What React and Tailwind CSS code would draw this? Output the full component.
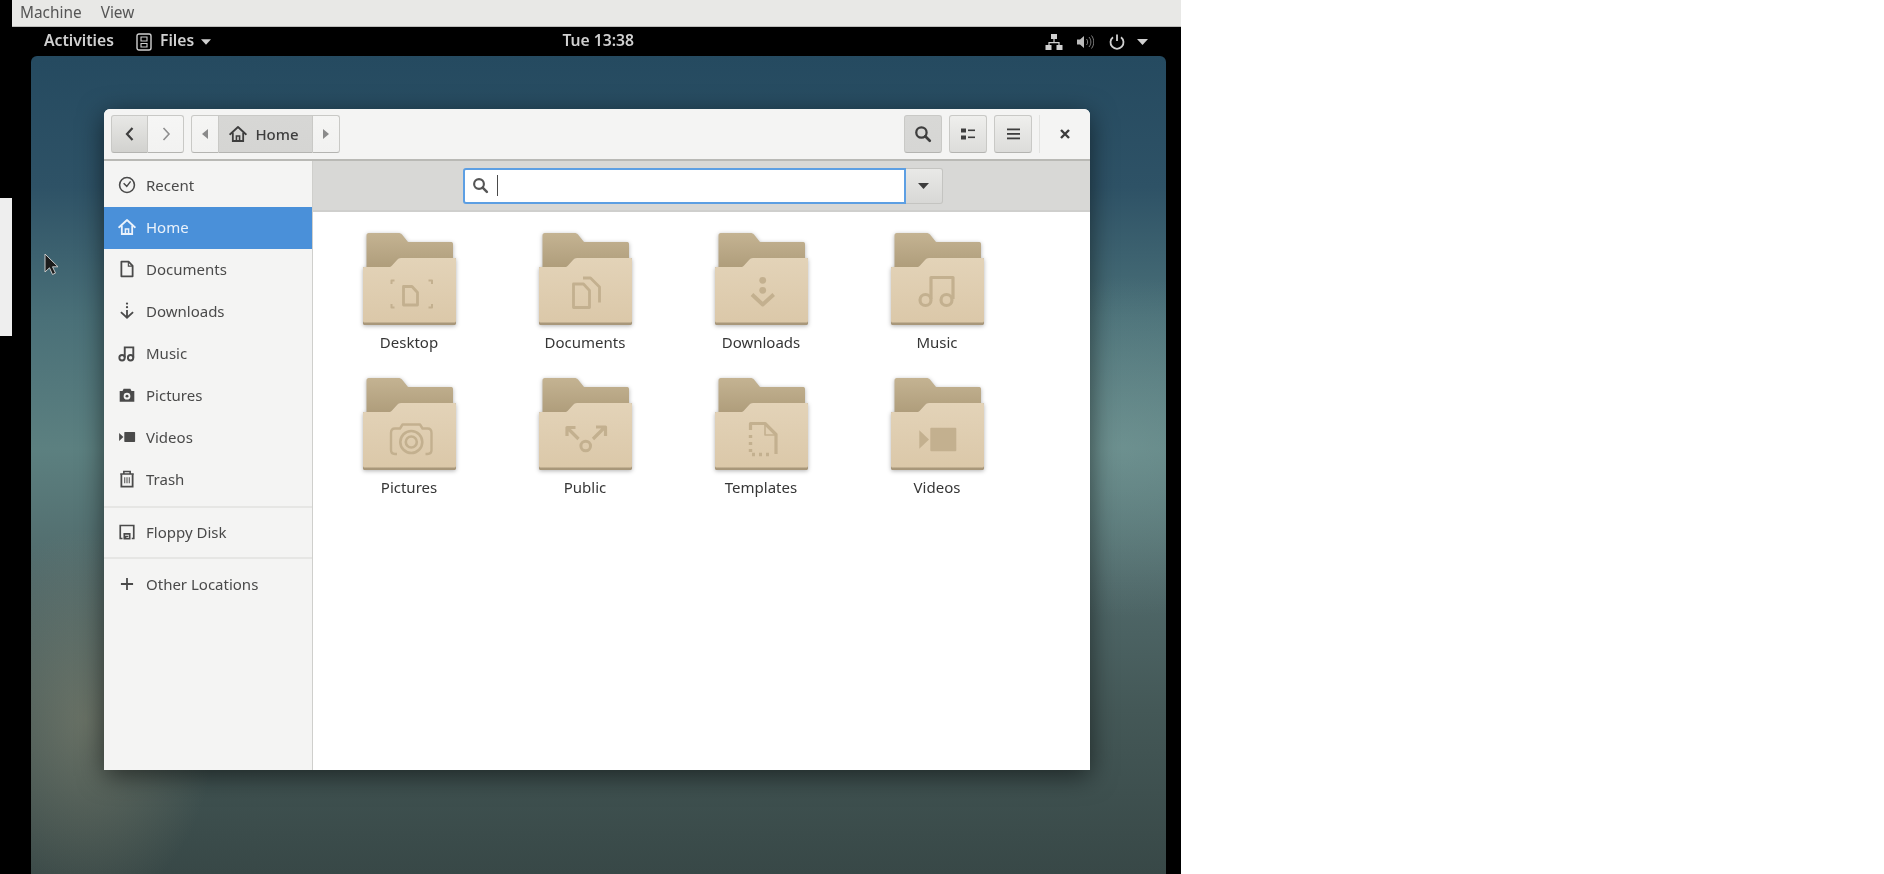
const uiFont = { fontFamily: '"Noto Sans", "Open Sans", sans-serif' };

function Glyph({ children, size = 18, className = '' }) {
  return (
    <svg width={size} height={size} viewBox="0 0 16 16" fill="none" stroke="currentColor" strokeWidth="1.4" className={`shrink-0 ${className}`}>
      {children}
    </svg>
  );
}

const HomeGlyph = (
  <>
    <path d="M1 8.200 8 1.800l7 6.400" strokeWidth="1.600" strokeLinecap="round" strokeLinejoin="round" />
    <path d="M3.400 6.600v7.600h9.200V6.600" strokeWidth="1.600" />
    <path d="M6.600 14V9.800h2.800V14" />
  </>
);

const SearchGlyph = (
  <>
    <circle cx="6.600" cy="6.600" r="4.600" strokeWidth="2" />
    <path d="m10 10 4 4" strokeWidth="2.400" strokeLinecap="round" />
  </>
);

const sidebarGlyphs = {
  recent: (
    <>
      <circle cx="8" cy="8" r="6.600" strokeWidth="1.400" />
      <path d="M5 6.400 7.800 9.200 11.200 4.800" strokeWidth="1.300" />
    </>
  ),
  home: HomeGlyph,
  documents: (
    <>
      <path d="M3 1.500h6.400L13 5.200v9.300H3z" strokeWidth="1.600" strokeLinejoin="round" />
      <path d="M9.200 1.500v3.900H13" strokeWidth="1" />
    </>
  ),
  downloads: (
    <>
      <circle cx="8" cy="1.400" r="1" fill="currentColor" stroke="none" />
      <circle cx="8" cy="4.600" r="1" fill="currentColor" stroke="none" />
      <path d="M8 7v6.400M2.600 9l5.400 5 5.400-5" strokeWidth="1.600" />
    </>
  ),
  music: (
    <>
      <circle cx="3.600" cy="12.200" r="2.400" strokeWidth="1.700" />
      <circle cx="11.200" cy="12.200" r="2.400" strokeWidth="1.700" />
      <path d="M6 12V3h7.600v9" strokeWidth="1.700" />
    </>
  ),
  pictures: (
    <>
      <path fillRule="evenodd" clipRule="evenodd" fill="currentColor" stroke="none" d="M5 2.500h6l1 2h2.500v9.500h-13V4.500H4zM8 6a3 3 0 1 0 0 6 3 3 0 0 0 0-6z" />
      <circle cx="8" cy="9" r="1.300" fill="currentColor" stroke="none" />
    </>
  ),
  videos: (
    <>
      <rect x="5.600" y="3.600" width="9.600" height="8.800" rx="0.600" fill="currentColor" stroke="none" />
      <path d="M1 4.400v7.200L4.800 8z" fill="currentColor" stroke="none" />
    </>
  ),
  trash: (
    <>
      <path d="M2 3.600h12M5.200 3.400V1.400h5.600v2" />
      <path d="M3 3.800v10.900h10V3.800" strokeWidth="1.600" />
      <path d="M6 6.400v5.400M8 6.400v5.400M10 6.400v5.400" strokeWidth="0.900" />
    </>
  ),
  floppy: (
    <>
      <path d="M4 13.800H2V2.200h12v11.600h-1.800" strokeWidth="1.500" />
      <path d="M5.600 14V9.600h4.800V14z" strokeWidth="1.500" />
      <path d="M6.800 14v-2h2.400" strokeWidth="1.200" />
    </>
  ),
  other: <path d="M8 2.600v10.800M2.600 8h10.800" strokeWidth="1.600" />,
};

const places = [
  ['recent', 'Recent'],
  ['home', 'Home'],
  ['documents', 'Documents'],
  ['downloads', 'Downloads'],
  ['music', 'Music'],
  ['pictures', 'Pictures'],
  ['videos', 'Videos'],
  ['trash', 'Trash'],
];

function SidebarRow({ icon, label, active }) {
  return (
    <div className={`flex h-[42px] items-center gap-[10px] pb-[2px] pl-[14px] text-[15px] ${active ? 'bg-[#4a90d9] text-[#eaf2fb]' : 'text-[#4a4a4a]'}`}>
      <Glyph>{sidebarGlyphs[icon]}</Glyph>
      <span>{label}</span>
    </div>
  );
}

// symbols pressed into the folder front, in folder coordinates
const folderMarks = {
  Desktop: (
    <>
      <path d="M40.500 53.500h8.500l5.500 6v12.500h-14z" strokeWidth="2.800" />
      <path d="M28.500 51v-3.500h3M65.500 47.500h3.500V51M28.500 71v3.500h3M65.500 74.500h3.500V71" strokeWidth="2" />
    </>
  ),
  Documents: (
    <>
      <path d="M34.500 51h10l6 6.500v17h-16z" strokeWidth="2.800" />
      <path d="M44 45h7.500l9 9v15.500" strokeWidth="2.800" />
    </>
  ),
  Downloads: (
    <>
      <circle cx="47.700" cy="47.300" r="3.400" fill="#c3b08f" stroke="none" />
      <circle cx="47.700" cy="57.300" r="3.400" fill="#c3b08f" stroke="none" />
      <path d="m37 61.500 10.700 10 11-10" strokeWidth="3.800" />
    </>
  ),
  Music: (
    <>
      <circle cx="34.500" cy="67" r="5.500" strokeWidth="3.200" />
      <circle cx="55.500" cy="67" r="5.500" strokeWidth="3.200" />
      <path d="M40 66V44.500h22V66" strokeWidth="3.200" />
    </>
  ),
  Pictures: (
    <>
      <path d="M34 76h-2c-2.500 0-4-1.500-4-4V55c0-3 1.500-4.500 4-4.500h5l2.500-4h17.500l2.500 4h5c2.500 0 4 1.500 4 4.500v17c0 2.500-1.500 4-4 4h-2" strokeWidth="2.400" />
      <circle cx="48.300" cy="64" r="11" strokeWidth="2.600" />
      <circle cx="48.300" cy="64" r="5.500" strokeWidth="2.600" />
    </>
  ),
  Public: (
    <>
      <circle cx="46.700" cy="68" r="4.800" strokeWidth="3" />
      <path d="M39.500 61 29 50.500M28 58v-8.500h8.500M54 61l11.500-11.500M57 49h9.500v9" strokeWidth="3.200" />
    </>
  ),
  Templates: (
    <>
      <path d="M35.500 52v-6.500h14.500l11 11v19.500" strokeWidth="3.200" />
      <path d="M50 46v11h11" strokeWidth="1.600" />
      <path d="M35.500 57v19.500H58" strokeWidth="3.400" strokeDasharray="3 4" />
    </>
  ),
  Videos: (
    <>
      <rect x="39.300" y="49.700" width="26" height="23.600" rx="1" fill="#c3b08f" stroke="none" />
      <path d="M28.300 52.300v18.400L38 61.500z" fill="#c3b08f" stroke="none" />
    </>
  ),
};

const folders = ['Desktop', 'Documents', 'Downloads', 'Music', 'Pictures', 'Public', 'Templates', 'Videos'];

function Folder({ name }) {
  const gradBack = `back-${name}`;
  const gradFront = `front-${name}`;
  return (
    <div className="flex flex-col items-center">
      <svg width="93" height="93" viewBox="0 0 93 93" className="block drop-shadow-[0_1px_2px_rgba(0,0,0,0.3)]">
        <defs>
          <linearGradient id={gradBack} x1="0" y1="0" x2="0" y2="1">
            <stop offset="0" stopColor="#c4b392" />
            <stop offset="1" stopColor="#ab9977" />
          </linearGradient>
          <linearGradient id={gradFront} x1="0" y1="0" x2="0" y2="1">
            <stop offset="0" stopColor="#e3d3b8" />
            <stop offset="1" stopColor="#dbc8a9" />
          </linearGradient>
        </defs>
        <path d="M3.500 2c0-1 1-2 2-2h30c1.500 0 2.500.5 3.500 1.500l6 7.500h43.500c1 0 1.500 1 1.500 2v30H3.500z" fill={`url(#${gradBack})`} />
        <path d="M0 90.500c0 .8.700 1.500 1.500 1.500h90c.800 0 1.500-.7 1.500-1.500V26.500c0-.8-.7-1.500-1.500-1.500H38c-2 0-3 .8-4 2l-5 5.500c-1 1-2 1.500-3.500 1.500H1.500C.7 34 0 34.700 0 35.500z" fill="#a8977a" />
        <path d="M0 88c0 .8.700 1.500 1.500 1.500h90c.800 0 1.500-.7 1.500-1.500V26.500c0-.8-.7-1.500-1.500-1.500H38c-2 0-3 .8-4 2l-5 5.500c-1 1-2 1.500-3.500 1.500H1.500C.7 34 0 34.700 0 35.500z" fill={`url(#${gradFront})`} />
        <g fill="none" stroke="#c3b08f" strokeLinejoin="round">{folderMarks[name]}</g>
      </svg>
      <span className="mt-[6px] text-[15px] leading-5 text-[#363636]">{name}</span>
    </div>
  );
}

function HeaderButton({ children, className = '' }) {
  return (
    <div className={`flex h-[38px] items-center justify-center rounded-[3px] border border-[#c9c9c6] border-b-[#b4b4b1] bg-gradient-to-b from-[#efefed] to-[#dcdcda] text-[#3e3e3e] ${className}`}>
      {children}
    </div>
  );
}

function TopBar() {
  return (
    <div className="flex h-[29px] items-center bg-black pl-[32px] pr-[33px] text-[15.7px] font-semibold text-[#d0d0d0]">
      <span className="pb-[2px]">Activities</span>
      <svg width="16" height="18" viewBox="0 0 16 18" fill="none" stroke="currentColor" className="ml-[22px]">
        <rect x="1" y="1" width="14" height="16" rx="2" strokeWidth="1.400" />
        <path d="M5 4h6v4H5zM5 10.500h6v3.500H5z" strokeWidth="1.100" />
      </svg>
      <span className="ml-[8px] pb-[2px]">Files</span>
      <svg width="10" height="6" viewBox="0 0 11 6" className="ml-[7px]">
        <path d="M0 0h11L5.500 6z" fill="currentColor" />
      </svg>
      <span className="ml-[351px] w-[72px] whitespace-nowrap pb-[2px] text-center">Tue 13:38</span>
      <div className="ml-auto flex items-center">
        <svg width="18" height="18" viewBox="0 0 18 18" fill="currentColor">
          <rect x="6" y="1" width="6" height="5" />
          <rect x="0.500" y="12" width="6" height="5" />
          <rect x="11.500" y="12" width="6" height="5" />
          <path d="M8.400 6h1.200v3h5v3h-1.200v-1.800H4.600V12H3.400V9h5z" />
        </svg>
        <svg width="18" height="18" viewBox="0 0 18 18" fill="currentColor" className="ml-[13px]">
          <path d="M1 6.500h3L8 3v12l-4-3.500H1z" opacity="0.9" />
          <path d="M10.500 6c1.500 1.500 1.500 4.500 0 6M13 4c2.500 3 2.500 7 0 10M15.500 2.500c3 4 3 9 0 13" fill="none" stroke="currentColor" strokeWidth="1" opacity="0.6" />
        </svg>
        <svg width="18" height="18" viewBox="0 0 18 18" fill="none" stroke="currentColor" strokeWidth="1.800" className="ml-[14px]">
          <path d="M9 1.500V8" />
          <path d="M5 4.200a6.500 6.500 0 1 0 8 0" />
        </svg>
        <svg width="11" height="6" viewBox="0 0 11 6" className="ml-[11px]">
          <path d="M0 0h11L5.500 6z" fill="currentColor" />
        </svg>
      </div>
    </div>
  );
}

function NautilusWindow() {
  return (
    <div className="flex h-[661px] w-[986px] flex-col overflow-hidden rounded-t-[6px] bg-white shadow-[0_6px_26px_rgba(0,0,0,0.55)]">
      <div className="flex h-[52px] shrink-0 items-center border-b-2 border-[#b9b9b5] bg-[#f4f4f3] pl-[7px] pr-[19px]">
        <div className="flex">
          <HeaderButton className="w-[37px] rounded-r-none !from-[#e8e8e6] !to-[#d2d2cf]">
            <Glyph size={16}><path d="M10.500 2 5 8l5.500 6" strokeWidth="2.200" /></Glyph>
          </HeaderButton>
          <HeaderButton className="w-[36px] rounded-l-none border-l-0 !from-[#f6f6f5] !to-[#f2f2f1] text-[#8f8f8f]">
            <Glyph size={16}><path d="M5.500 2 11 8l-5.500 6" strokeWidth="1.600" /></Glyph>
          </HeaderButton>
        </div>
        <div className="ml-[7px] flex">
          <HeaderButton className="w-[28px] rounded-r-none !from-[#f5f5f4] !to-[#f1f1f0] text-[#8a8a8a]">
            <svg width="6" height="10" viewBox="0 0 6 10"><path d="M6 0v10L0 5z" fill="currentColor" /></svg>
          </HeaderButton>
          <HeaderButton className="w-[93px] gap-[8px] rounded-none border-x-0 !from-[#d7d7d5] !to-[#d5d5d3] pr-[3px] text-[15px] font-medium">
            <Glyph size={18}>{HomeGlyph}</Glyph>
            <span>Home</span>
          </HeaderButton>
          <HeaderButton className="w-[28px] rounded-l-none !from-[#f5f5f4] !to-[#f1f1f0] text-[#8a8a8a]">
            <svg width="6" height="10" viewBox="0 0 6 10"><path d="M0 0v10l6-5z" fill="currentColor" /></svg>
          </HeaderButton>
        </div>
        <HeaderButton className="ml-auto w-[38px] !from-[#d8d8d6] !to-[#d6d6d4]">
          <Glyph size={18}>{SearchGlyph}</Glyph>
        </HeaderButton>
        <HeaderButton className="ml-[7px] w-[38px]">
          <svg width="14" height="12" viewBox="0 0 14 12" fill="currentColor">
            <rect x="0" y="0.500" width="5" height="4" />
            <rect x="0" y="7.500" width="5" height="4" />
            <rect x="7" y="1.500" width="7" height="1.600" />
            <rect x="7" y="8.500" width="7" height="1.600" />
          </svg>
        </HeaderButton>
        <HeaderButton className="ml-[7px] w-[38px]">
          <svg width="13" height="12" viewBox="0 0 13 12" fill="currentColor">
            <rect y="0.500" width="13" height="1.800" />
            <rect y="5" width="13" height="1.800" />
            <rect y="9.500" width="13" height="1.800" />
          </svg>
        </HeaderButton>
        <div className="ml-[7px] h-[38px] w-px bg-[#e2e2e0]" />
        <svg width="12" height="12" viewBox="0 0 12 12" stroke="#3c3c3c" strokeWidth="2.400" className="ml-[19px]">
          <path d="m2 2 8 8M10 2l-8 8" />
        </svg>
      </div>
      <div className="flex min-h-0 flex-1">
        <aside className="w-[209px] shrink-0 border-r border-[#cfcfcc] bg-[#f4f4f3] pt-[4px]">
          {places.map(([icon, label]) => (
            <SidebarRow key={icon} icon={icon} label={label} active={icon === 'home'} />
          ))}
          <div className="mb-[4px] mt-[5px] h-[2px] bg-[#e6e6e4]" />
          <SidebarRow icon="floppy" label="Floppy Disk" />
          <div className="mb-[5px] mt-[3px] h-[2px] bg-[#e6e6e4]" />
          <SidebarRow icon="other" label="Other Locations" />
        </aside>
        <main className="flex min-w-0 flex-1 flex-col">
          <div className="flex h-[51px] shrink-0 items-center justify-center border-b-2 border-[#cfcfcd] bg-[#d8d8d6] pl-[2px]">
            <div className="flex h-[36px] w-[443px] items-center rounded-l-[3px] border-2 border-[#5d9fe3] bg-white pl-[7px]">
              <Glyph size={17} className="text-[#555555]">{SearchGlyph}</Glyph>
              <div className="ml-[8px] h-[21px] w-px bg-[#4a4a4a]" />
            </div>
            <div className="flex h-[36px] w-[37px] items-center justify-center rounded-r-[3px] border border-l-0 border-[#c4c4c1] bg-gradient-to-b from-[#e9e9e7] to-[#d8d8d6]">
              <svg width="11" height="6" viewBox="0 0 11 6"><path d="M0 0h11L5.500 6z" fill="#3c3c3c" /></svg>
            </div>
          </div>
          <div className="grid grid-cols-[repeat(4,176px)] gap-y-[26px] pl-[8px] pt-[21px]">
            {folders.map((name) => (
              <Folder key={name} name={name} />
            ))}
          </div>
        </main>
      </div>
    </div>
  );
}

export default function App() {
  return (
    <div style={uiFont} className="flex h-[874px] w-[1884px] overflow-hidden bg-white blur-[0.4px]">
      <div className="flex w-[12px] shrink-0 flex-col bg-black pt-[198px]">
        <div className="h-[138px] bg-[#eeeeee]" />
      </div>
      <div className="flex w-[1169px] shrink-0 flex-col bg-black">
        <div className="flex h-[27px] shrink-0 items-center gap-[19px] border-b border-[#bdbdbb] bg-[#e8e8e6] pl-[8px] text-[15.4px] text-[#555555]">
          <span>Machine</span>
          <span>View</span>
        </div>
        <TopBar />
        <div className="relative ml-[19px] mr-[15px] flex-1 overflow-hidden rounded-t-[6px] bg-[radial-gradient(ellipse_130px_190px_at_55px_664px,rgba(150,145,120,0.45),transparent),radial-gradient(ellipse_230px_170px_at_1090px_391px,rgba(125,160,158,0.5),transparent),linear-gradient(180deg,#254a60_0%,#2e5266_16%,#4a7078_32%,#5c8080_48%,#50696a_64%,#445857_80%,#384847_100%)] pl-[73px] pt-[53px]">
          <NautilusWindow />
          <svg width="14" height="23" viewBox="0 0 14 23" className="absolute left-[13px] top-[197px]">
            <path d="M1 1v18l4.500-4.200 3 6.700 3-1.400-3-6.300H14z" fill="#1c1c1c" stroke="#c8c8c8" strokeWidth="1" />
          </svg>
        </div>
      </div>
    </div>
  );
}
